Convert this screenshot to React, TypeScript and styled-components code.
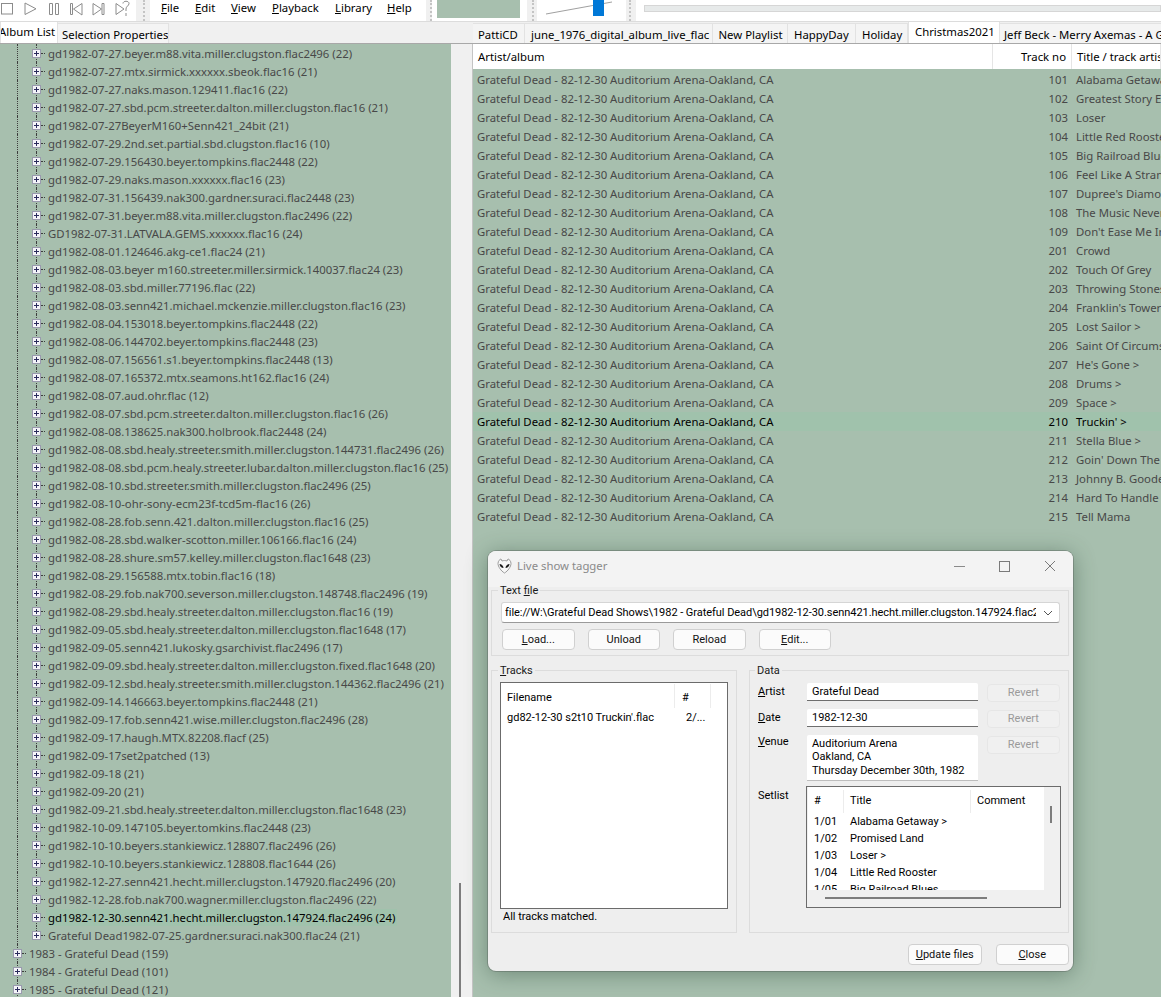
import React from "react";
import styled, { createGlobalStyle } from "styled-components";

const Global = createGlobalStyle`
  html, body { margin: 0; padding: 0; height: 997px; overflow: hidden; background: #f0f0f0; }
  #root { height: 997px; }
  * { box-sizing: border-box; }
  body { font-family: "Noto Sans", "Open Sans", sans-serif; font-size: 11.35px; color: #000; }
  u { text-underline-offset: 1px; text-decoration-thickness: 1px; }
`;

const Page = styled.div`
  position: relative; width: 1161px; height: 997px; overflow: hidden;
  display: flex; flex-direction: column; background: #f0f0f0;
`;

const TopBar = styled.header`
  height: 22px; flex: none; display: flex; align-items: stretch; background: #fff;
  border-bottom: 1px solid #dcdcdc; overflow: hidden;
`;
const Transport = styled.div`
  width: 136px; flex: none; display: flex; align-items: flex-start; padding: 2px 0 0 1px;
  svg { display: block; flex: none; }
`;
const Sep = styled.div<{ $w: number; $dot: number }>`
  width: ${p => p.$w}px; flex: none; background: #f0f0f0; position: relative;
  &::after { content: ""; position: absolute; left: ${p => p.$dot}px; top: 0; bottom: 0; border-left: 2px dotted #c4c4c4; }
`;
const Menu = styled.nav`
  width: 276px; flex: none; display: flex; align-items: center; padding: 0 0 0 11px;
`;
const MenuItem = styled.span<{ $w: number }>`
  width: ${p => p.$w}px; flex: none; line-height: 16px; white-space: nowrap; padding-bottom: 6px;
`;
const Visual = styled.div`
  width: 95px; flex: none; padding: 0 7px 3px 5px; background: #fff;
`;
const VisualFill = styled.div` height: 18px; background: #a7bfae; `;
const Volume = styled.div`
  width: 89px; flex: none; position: relative; background: #fff;
`;
const VolumeLine = styled.svg` display: block; `;
const VolumeThumb = styled.div`
  position: absolute; left: 56px; top: 0; width: 11px; height: 16px; background: #0078d7;
`;
const SeekWrap = styled.div` flex: 1; padding: 5px 0 0 8px; background: #fff; `;
const Seek = styled.div` height: 7px; background: #e7eaea; border: 1px solid #d6d6d6; `;

const Main = styled.main` flex: 1; display: flex; min-height: 0; `;
const LeftPane = styled.section` width: 472px; flex: none; display: flex; flex-direction: column; `;
const RightPane = styled.section` flex: 1; display: flex; flex-direction: column; min-width: 0; `;

const TabRow = styled.div<{ $pad?: number }>`
  height: 22px; flex: none; display: flex; align-items: flex-end; background: #f0f0f0;
  padding-left: ${p => p.$pad ?? 0}px; white-space: nowrap; overflow: hidden;
  border-bottom: 1px solid #a8a8a8;
`;
const Tab = styled.div<{ $w: number; $active?: boolean; $off?: number }>`
  width: ${p => p.$w}px; flex: none; height: ${p => (p.$active ? 22 : 20)}px;
  background: ${p => (p.$active ? "#ffffff" : "#f4f4f4")};
  border: 1px solid #e2e2e2; border-bottom: none; border-left-width: ${p => (p.$active ? 1 : 0)}px;
  padding-left: ${p => p.$off ?? 4}px; line-height: ${p => (p.$active ? 19 : 21)}px;
  overflow: hidden; white-space: nowrap;
`;
const ClippedTabLabel = styled.span` display: inline-block; margin-left: -2px; `;

const TreeWrap = styled.div` flex: 1; display: flex; min-height: 0; `;
const Tree = styled.div` width: 451px; flex: none; background: #a7bfae; overflow: hidden; `;
const TreeScroll = styled.div`
  width: 17px; flex: none; background: #f0f0f0; display: flex; flex-direction: column; justify-content: flex-end; align-items: center;
`;
const TreeThumb = styled.div` width: 2px; height: 114px; background: #7d7d7d; margin-right: -1px; `;
const TreeRow = styled.div<{ $level: number; $selected?: boolean; $last?: boolean }>`
  position: relative; height: 18px; display: flex; align-items: center;
  padding-left: ${p => (p.$level === 1 ? 32 : 13)}px; white-space: nowrap;
  color: ${p => (p.$selected ? "#000" : "#484848")};
  &::before {
    content: ""; position: absolute; left: 17px; top: 0; bottom: 0; border-left: 1px dotted #3d3d3d;
  }
  &::after {
    content: ""; position: absolute; left: 36px; top: 0; bottom: ${p => (p.$last ? "9px" : "0")};
    border-left: 1px dotted #3d3d3d; display: ${p => (p.$level === 1 ? "block" : "none")};
  }
`;
const Plus = styled.span`
  position: relative; z-index: 1; width: 9px; height: 9px; flex: none; margin-top: 1px;
  background: #f4f4f8; border: 1px solid #9a9aae; display: block;
  &::before { content: ""; position: absolute; left: 1px; right: 1px; top: 3px; height: 1px; background: #29295c; }
  &::after { content: ""; position: absolute; top: 1px; bottom: 1px; left: 3px; width: 1px; background: #29295c; }
`;
const Dash = styled.span` width: 4px; height: 0; flex: none; border-top: 1px dotted #3d3d3d; margin: 0 1px 0 0; `;
const TreeLabel = styled.span<{ $selected?: boolean }>`
  padding: 1px 2px 0 2px; height: 17px; line-height: 16px;
  background: ${p => (p.$selected ? "#a0c2ac" : "transparent")};
`;

const ListArea = styled.div`
  flex: 1; background: #a7bfae; overflow: hidden; min-height: 0; border-left: 1px solid #c4c4c4;
`;
const Header = styled.div`
  height: 25px; background: #fff; display: grid; grid-template-columns: 520px 79px 1fr; align-items: center;
  margin-bottom: 1px;
`;
const HeadCell = styled.div<{ $right?: boolean; $pl: number }>`
  height: 25px; line-height: 26px; padding: 0 5px 0 ${p => p.$pl}px; text-align: ${p => (p.$right ? "right" : "left")};
  border-right: 1px solid #e5e5e5; white-space: nowrap; overflow: hidden;
`;
const Rows = styled.div` display: flex; flex-direction: column; `;
const PlRow = styled.div<{ $focus?: boolean }>`
  height: 19px; display: grid; grid-template-columns: 520px 79px 1fr; align-items: center; white-space: nowrap;
  color: ${p => (p.$focus ? "#000" : "#484848")};
  background: ${p => (p.$focus ? "#a0c2ac" : "transparent")};
`;
const PlCell = styled.div<{ $right?: boolean; $pl: number }>`
  padding: 0 4px 0 ${p => p.$pl}px; overflow: hidden; text-align: ${p => (p.$right ? "right" : "left")};
`;

const Dialog = styled.div`
  position: absolute; left: 488px; top: 551px; width: 585px; height: 420px; background: #eeeeee;
  border-radius: 8px; box-shadow: 0 3px 22px rgba(40, 70, 50, 0.45), 0 0 0 1px rgba(90, 90, 90, 0.35);
  overflow: hidden; display: flex; flex-direction: column;
  font-family: Roboto, "Noto Sans", sans-serif; font-size: 11px;
`;
const DialogTitle = styled.div`
  height: 36px; flex: none; background: #f3f3f3; display: flex; align-items: center; padding: 0 0 7px 9px;
  color: #8a8a8a; font-family: "Noto Sans", sans-serif; font-size: 11.35px;
`;
const TitleText = styled.span` margin-left: 5px; flex: 1; `;
const WinBtn = styled.span<{ $gap: number }>` display: block; margin-right: ${p => p.$gap}px; height: 14px; svg { display: block; } `;
const DialogBody = styled.div`
  flex: 1; display: flex; flex-direction: column; padding: 0 4px 6px 3px; min-height: 0;
`;
const Group = styled.fieldset<{ $w?: number }>`
  margin: 0; min-width: 0; border: 1px solid #dcdcdc; padding: 0;
  ${p => (p.$w ? `width: ${p.$w}px; flex: none;` : "")}
`;
const Legend = styled.legend`
  padding: 0 2px; margin-left: -2px; height: 12px; line-height: 14px; color: #1a1a1a;
`;
const TextFileBox = styled(Group)` flex: none; height: 72px; margin-top: -3px; padding: 6px 8px 0 8px; `;
const Combo = styled.div`
  height: 21px; margin-left: 1px; background: #fff; border: 1px solid #d5d5d5; border-bottom-color: #9a9a9a; border-radius: 3px;
  display: flex; align-items: center; padding: 0 6px 0 3px; overflow: hidden; white-space: nowrap; letter-spacing: -0.05px;
`;
const ComboText = styled.span` flex: 1; overflow: hidden; `;
const ComboArrow = styled.svg` flex: none; margin-left: 7px; `;
const BtnRow = styled.div` display: flex; gap: 13px; margin: 6px 0 0 2px; `;
const Btn = styled.button<{ $disabled?: boolean; $h?: number }>`
  width: 72.5px; height: ${p => p.$h ?? 21}px; flex: none; padding: 0; background: ${p => (p.$disabled ? "#f0f0f0" : "#fbfbfb")};
  color: ${p => (p.$disabled ? "#9a9a9a" : "#111")};
  border: 1px solid ${p => (p.$disabled ? "#e6e6e6" : "#d0d0d0")}; border-radius: 4px;
  font: inherit; line-height: 16px;
`;
const Columns = styled.div` flex: none; display: flex; gap: 12px; margin-top: 8px; `;
const TracksGroup = styled(Group)` padding: 6px 8px 0 8px; height: 269px; `;
const DataGroup = styled(Group)` flex: 1; height: 269px; padding: 7px 9px 0 7px; `;
const ListBox = styled.div`
  height: 227px; background: #fff; border: 1px solid #6b6b6b; overflow: hidden; padding: 1px 0 0 0;
`;
const TrackHead = styled.div`
  height: 24px; display: grid; grid-template-columns: 174px 36px 1fr; align-items: center;
`;
const TrackHeadCell = styled.div<{ $pad: number }>`
  padding-left: ${p => p.$pad}px; height: 24px; line-height: 28px; border-right: 1px solid #ececec;
`;
const TrackRow = styled.div`
  height: 19px; display: grid; grid-template-columns: 174px 36px; align-items: center; white-space: nowrap;
`;
const TrackCell = styled.div<{ $pad: number }>` padding-left: ${p => p.$pad}px; `;
const Status = styled.div` padding: 0 0 0 3px; line-height: 16px; `;
const DataRow = styled.div<{ $h: number }>`
  display: grid; grid-template-columns: 50px 171px 71px; column-gap: 0; height: ${p => p.$h}px; align-items: start;
`;
const FieldLabel = styled.div<{ $dy?: number }>`
  line-height: 16px; margin-top: ${p => p.$dy ?? 0}px; padding-left: 1px;
`;
const Field = styled.div<{ $h: number; $strong?: boolean; $pt?: number }>`
  height: ${p => p.$h}px; background: #fff; border-bottom: 1px solid ${p => (p.$strong ? "#6e6e6e" : "#bdbdbd")};
  padding: ${p => p.$pt ?? 0}px 5px 0; line-height: ${p => (p.$h < 30 ? p.$h - 1 + "px" : "13.3px")}; white-space: pre-line;
  border-radius: 2px 2px 0 0;
`;
const RevertCell = styled.div` padding: 1px 0 0 9px; `;
const SetlistRow = styled.div` display: grid; grid-template-columns: 49px 1fr; margin-top: 5px; `;
const SetlistBox = styled.div`
  position: relative; width: 255px; height: 122px; background: #f0f0f0; border: 1px solid #6b6b6b; overflow: hidden; margin-right: -1px;
`;
const SetInner = styled.div` width: 236px; height: 103px; background: #fff; overflow: hidden; padding-top: 3px; margin-left: 1px; `;
const SetHead = styled.div`
  height: 23px; display: grid; grid-template-columns: 36px 127px 1fr;
`;
const SetHeadCell = styled.div<{ $end?: boolean }>`
  padding-left: 6px; line-height: 22px; border-right: ${p => (p.$end ? "none" : "1px solid #ececec")}; white-space: nowrap;
`;
const SetRow = styled.div`
  height: 17px; display: grid; grid-template-columns: 36px 1fr; align-items: center; white-space: nowrap;
`;
const SetCell = styled.div` padding-left: 6px; `;
const VThumb = styled.div` position: absolute; right: 8px; top: 19px; width: 2px; height: 17px; background: #7d7d7d; `;
const HThumb = styled.div` position: absolute; left: 18px; bottom: 8px; width: 162px; height: 2px; background: #7d7d7d; `;
const Footer = styled.div` flex: none; display: flex; justify-content: flex-end; gap: 14px; padding: 11px 0 0 0; `;
const FootBtn = styled(Btn)` width: 73.5px; height: 21px; `;

const plain = { fill: "none", stroke: "#8c8c8c", strokeWidth: 1 };
const IconSlot = styled.svg<{ $ml: number; $mt?: number }>` margin-left: ${p => p.$ml}px; margin-top: ${p => p.$mt ?? 0}px; `;
const TransportIcons = () => (
  <>
    <IconSlot $ml={0} width="12" height="16" viewBox="0 0 12 16"><rect x="0.5" y="1.5" width="11" height="10.5" {...plain} /></IconSlot>
    <IconSlot $ml={11} width="13" height="16" viewBox="0 0 13 16"><path d="M1 1 L12 6.8 L1 12.5 Z" {...plain} /></IconSlot>
    <IconSlot $ml={12} width="10" height="16" viewBox="0 0 10 16"><path d="M0.5 1.5h3v11h-3z M6.5 1.5h3v11h-3z" {...plain} /></IconSlot>
    <IconSlot $ml={11} width="13" height="16" viewBox="0 0 13 16"><path d="M0.5 1.5h2v11h-2z M12 1.5 L3.5 7 L12 13 Z" {...plain} /></IconSlot>
    <IconSlot $ml={9} width="13" height="16" viewBox="0 0 13 16"><path d="M10 1.5h2v11h-2z M1 1.5 L9.5 7 L1 13 Z" {...plain} /></IconSlot>
    <IconSlot $ml={10} $mt={-2} width="16" height="18" viewBox="0 0 16 18">
      <path d="M1 3.5 L9 9 L1 14.5 Z" {...plain} />
      <path d="M8 3.5 C8 0.5 14 0.5 14 3.5 C14 6 11 6 11 9 V11 M11 13v3" {...plain} />
    </IconSlot>
  </>
);

const Alien = () => (
  <svg width="15" height="16" viewBox="0 0 15 16">
    <path d="M7.5 15 C4 13 1 8.5 1 5.5 C1 3 3 1 4 1 L5 3 C6.5 2.4 8.5 2.4 10 3 L11 1 C12 1 14 3 14 5.5 C14 8.5 11 13 7.5 15 Z" fill="#f7f7f7" stroke="#9a9a9a" strokeWidth="1" />
    <path d="M2.5 6 C4.5 6 6.5 8 6.5 10 C4.5 10 2.8 8.5 2.5 6 Z M12.5 6 C10.5 6 8.5 8 8.5 10 C10.5 10 12.2 8.5 12.5 6 Z" fill="#1c1c1c" />
  </svg>
);

const trees = `gd1982-07-27.beyer.m88.vita.miller.clugston.flac2496 (22)
gd1982-07-27.mtx.sirmick.xxxxxx.sbeok.flac16 (21)
gd1982-07-27.naks.mason.129411.flac16 (22)
gd1982-07-27.sbd.pcm.streeter.dalton.miller.clugston.flac16 (21)
gd1982-07-27BeyerM160+Senn421_24bit (21)
gd1982-07-29.2nd.set.partial.sbd.clugston.flac16 (10)
gd1982-07-29.156430.beyer.tompkins.flac2448 (22)
gd1982-07-29.naks.mason.xxxxxx.flac16 (23)
gd1982-07-31.156439.nak300.gardner.suraci.flac2448 (23)
gd1982-07-31.beyer.m88.vita.miller.clugston.flac2496 (22)
GD1982-07-31.LATVALA.GEMS.xxxxxx.flac16 (24)
gd1982-08-01.124646.akg-ce1.flac24 (21)
gd1982-08-03.beyer m160.streeter.miller.sirmick.140037.flac24 (23)
gd1982-08-03.sbd.miller.77196.flac (22)
gd1982-08-03.senn421.michael.mckenzie.miller.clugston.flac16 (23)
gd1982-08-04.153018.beyer.tompkins.flac2448 (22)
gd1982-08-06.144702.beyer.tompkins.flac2448 (23)
gd1982-08-07.156561.s1.beyer.tompkins.flac2448 (13)
gd1982-08-07.165372.mtx.seamons.ht162.flac16 (24)
gd1982-08-07.aud.ohr.flac (12)
gd1982-08-07.sbd.pcm.streeter.dalton.miller.clugston.flac16 (26)
gd1982-08-08.138625.nak300.holbrook.flac2448 (24)
gd1982-08-08.sbd.healy.streeter.smith.miller.clugston.144731.flac2496 (26)
gd1982-08-08.sbd.pcm.healy.streeter.lubar.dalton.miller.clugston.flac16 (25)
gd1982-08-10.sbd.streeter.smith.miller.clugston.flac2496 (25)
gd1982-08-10-ohr-sony-ecm23f-tcd5m-flac16 (26)
gd1982-08-28.fob.senn.421.dalton.miller.clugston.flac16 (25)
gd1982-08-28.sbd.walker-scotton.miller.106166.flac16 (24)
gd1982-08-28.shure.sm57.kelley.miller.clugston.flac1648 (23)
gd1982-08-29.156588.mtx.tobin.flac16 (18)
gd1982-08-29.fob.nak700.severson.miller.clugston.148748.flac2496 (19)
gd1982-08-29.sbd.healy.streeter.dalton.miller.clugston.flac16 (19)
gd1982-09-05.sbd.healy.streeter.dalton.miller.clugston.flac1648 (17)
gd1982-09-05.senn421.lukosky.gsarchivist.flac2496 (17)
gd1982-09-09.sbd.healy.streeter.dalton.miller.clugston.fixed.flac1648 (20)
gd1982-09-12.sbd.healy.streeter.smith.miller.clugston.144362.flac2496 (21)
gd1982-09-14.146663.beyer.tompkins.flac2448 (21)
gd1982-09-17.fob.senn421.wise.miller.clugston.flac2496 (28)
gd1982-09-17.haugh.MTX.82208.flacf (25)
gd1982-09-17set2patched (13)
gd1982-09-18 (21)
gd1982-09-20 (21)
gd1982-09-21.sbd.healy.streeter.dalton.miller.clugston.flac1648 (23)
gd1982-10-09.147105.beyer.tomkins.flac2448 (23)
gd1982-10-10.beyers.stankiewicz.128807.flac2496 (26)
gd1982-10-10.beyers.stankiewicz.128808.flac1644 (26)
gd1982-12-27.senn421.hecht.miller.clugston.147920.flac2496 (20)
gd1982-12-28.fob.nak700.wagner.miller.clugston.flac2496 (22)
gd1982-12-30.senn421.hecht.miller.clugston.147924.flac2496 (24)
Grateful Dead1982-07-25.gardner.suraci.nak300.flac24 (21)`.split("\n");

const years = ["1983 - Grateful Dead (159)", "1984 - Grateful Dead (101)", "1985 - Grateful Dead (121)"];

const tracks: [string, string][] = [
  ["101", "Alabama Getaway >"], ["102", "Greatest Story Ever Told"], ["103", "Loser"], ["104", "Little Red Rooster"],
  ["105", "Big Railroad Blues"], ["106", "Feel Like A Stranger"], ["107", "Dupree's Diamond Blues"], ["108", "The Music Never Stopped"],
  ["109", "Don't Ease Me In"], ["201", "Crowd"], ["202", "Touch Of Grey"], ["203", "Throwing Stones"],
  ["204", "Franklin's Tower"], ["205", "Lost Sailor >"], ["206", "Saint Of Circumstance"], ["207", "He's Gone >"],
  ["208", "Drums >"], ["209", "Space >"], ["210", "Truckin' >"], ["211", "Stella Blue >"],
  ["212", "Goin' Down The Road"], ["213", "Johnny B. Goode"], ["214", "Hard To Handle"], ["215", "Tell Mama"],
];

const setlist: [string, string][] = [
  ["1/01", "Alabama Getaway >"], ["1/02", "Promised Land"], ["1/03", "Loser >"], ["1/04", "Little Red Rooster"], ["1/05", "Big Railroad Blues"],
];

const menus: [string, string, number][] = [["F", "ile", 34], ["E", "dit", 36], ["V", "iew", 41], ["P", "layback", 63], ["L", "ibrary", 52], ["H", "elp", 38]];

const rightTabs: [string, number, number, boolean?][] = [
  ["PattiCD", 52, 5], ["june_1976_digital_album_live_flac", 187.5, 6], ["New Playlist", 75.5, 6], ["HappyDay", 68, 6], ["Holiday", 52, 6],
  ["Christmas2021", 92, 6, true], ["Jeff Beck - Merry Axemas - A Guitar Christmas", 300, 4],
];

export default function App() {
  return (
    <Page>
      <Global />
      <TopBar>
        <Transport><TransportIcons /></Transport>
        <Sep $w={14} $dot={7} />
        <Menu>
          {menus.map(([a, b, w]) => (
            <MenuItem key={a} $w={w}><u>{a}</u>{b}</MenuItem>
          ))}
        </Menu>
        <Sep $w={6} $dot={4} />
        <Visual><VisualFill /></Visual>
        <Sep $w={10} $dot={5} />
        <Volume>
          <VolumeLine width="89" height="16" viewBox="0 0 89 16">
            <path d="M9 14 L75 2" stroke="#a0a0a0" strokeWidth="1" fill="none" />
          </VolumeLine>
          <VolumeThumb />
        </Volume>
        <Sep $w={10} $dot={3} />
        <SeekWrap><Seek /></SeekWrap>
      </TopBar>
      <Main>
        <LeftPane>
          <TabRow>
            <Tab $w={58} $active $off={0}><ClippedTabLabel>Album List</ClippedTabLabel></Tab>
            <Tab $w={111}>Selection Properties</Tab>
          </TabRow>
          <TreeWrap>
            <Tree>
              {trees.map((t, i) => (
                <TreeRow key={t} $level={1} $selected={i === 48} $last={i === trees.length - 1}>
                  <Plus /><Dash /><TreeLabel $selected={i === 48}>{t}</TreeLabel>
                </TreeRow>
              ))}
              {years.map(y => (
                <TreeRow key={y} $level={0}>
                  <Plus /><Dash /><TreeLabel>{y}</TreeLabel>
                </TreeRow>
              ))}
            </Tree>
            <TreeScroll><TreeThumb /></TreeScroll>
          </TreeWrap>
        </LeftPane>
        <RightPane>
          <TabRow $pad={1}>
            {rightTabs.map(([t, w, o, a]) => (
              <Tab key={t} $w={w} $off={o} $active={a}>{t}</Tab>
            ))}
          </TabRow>
          <ListArea>
            <Header>
              <HeadCell $pl={5}>Artist/album</HeadCell>
              <HeadCell $pl={5} $right>Track no</HeadCell>
              <HeadCell $pl={5}>Title / track artist</HeadCell>
            </Header>
            <Rows>
              {tracks.map(([n, t]) => (
                <PlRow key={n} $focus={n === "210"}>
                  <PlCell $pl={4}>Grateful Dead - 82-12-30 Auditorium Arena-Oakland, CA</PlCell>
                  <PlCell $pl={4} $right>{n}</PlCell>
                  <PlCell $pl={4}>{t}</PlCell>
                </PlRow>
              ))}
            </Rows>
          </ListArea>
        </RightPane>
      </Main>

      <Dialog>
        <DialogTitle>
          <Alien />
          <TitleText>Live show tagger</TitleText>
          <WinBtn $gap={34}><svg width="11" height="14" viewBox="0 0 11 14"><path d="M0 7.5h11" stroke="#8a8a8a" /></svg></WinBtn>
          <WinBtn $gap={34}><svg width="11" height="14" viewBox="0 0 11 14"><rect x="0.5" y="2.5" width="10" height="10" fill="none" stroke="#7a7a7a" /></svg></WinBtn>
          <WinBtn $gap={17}><svg width="12" height="14" viewBox="0 0 12 14"><path d="M1 2 L11 12 M11 2 L1 12" stroke="#7a7a7a" fill="none" /></svg></WinBtn>
        </DialogTitle>
        <DialogBody>
          <TextFileBox>
            <Legend>Text <u>f</u>ile</Legend>
            <Combo>
              <ComboText>file://W:\Grateful Dead Shows\1982 - Grateful Dead\gd1982-12-30.senn421.hecht.miller.clugston.147924.flac2496</ComboText>
              <ComboArrow width="10" height="6" viewBox="0 0 10 6"><path d="M1 1 L5 5 L9 1" fill="none" stroke="#555" /></ComboArrow>
            </Combo>
            <BtnRow>
              <Btn><u>L</u>oad...</Btn>
              <Btn>Unload</Btn>
              <Btn>Reload</Btn>
              <Btn><u>E</u>dit...</Btn>
            </BtnRow>
          </TextFileBox>
          <Columns>
            <TracksGroup $w={246}>
              <Legend><u>T</u>racks</Legend>
              <ListBox>
                <TrackHead>
                  <TrackHeadCell $pad={6}>Filename</TrackHeadCell>
                  <TrackHeadCell $pad={7}>#</TrackHeadCell>
                </TrackHead>
                <TrackRow>
                  <TrackCell $pad={6}>gd82-12-30 s2t10 Truckin'.flac</TrackCell>
                  <TrackCell $pad={11}>2/...</TrackCell>
                </TrackRow>
              </ListBox>
              <Status>All tracks matched.</Status>
            </TracksGroup>
            <DataGroup>
              <Legend>Data</Legend>
              <DataRow $h={26}>
                <FieldLabel $dy={1}><u>A</u>rtist</FieldLabel>
                <Field $h={18} $strong>Grateful Dead</Field>
                <RevertCell><Btn $disabled $h={18}>Revert</Btn></RevertCell>
              </DataRow>
              <DataRow $h={26}>
                <FieldLabel $dy={1}><u>D</u>ate</FieldLabel>
                <Field $h={18} $strong>1982-12-30</Field>
                <RevertCell><Btn $disabled $h={18}>Revert</Btn></RevertCell>
              </DataRow>
              <DataRow $h={46}>
                <FieldLabel $dy={-1}><u>V</u>enue</FieldLabel>
                <Field $h={46} $pt={2}>{"Auditorium Arena\nOakland, CA\nThursday December 30th, 1982"}</Field>
                <RevertCell><Btn $disabled $h={18}>Revert</Btn></RevertCell>
              </DataRow>
              <SetlistRow>
                <FieldLabel $dy={2}>Setlist</FieldLabel>
                <SetlistBox>
                  <SetInner>
                    <SetHead>
                      <SetHeadCell>#</SetHeadCell>
                      <SetHeadCell>Title</SetHeadCell>
                      <SetHeadCell $end>Comment</SetHeadCell>
                    </SetHead>
                    {setlist.map(([n, t]) => (
                      <SetRow key={n}><SetCell>{n}</SetCell><SetCell>{t}</SetCell></SetRow>
                    ))}
                  </SetInner>
                  <VThumb />
                  <HThumb />
                </SetlistBox>
              </SetlistRow>
            </DataGroup>
          </Columns>
          <Footer>
            <FootBtn><u>U</u>pdate files</FootBtn>
            <FootBtn><u>C</u>lose</FootBtn>
          </Footer>
        </DialogBody>
      </Dialog>
    </Page>
  );
}
